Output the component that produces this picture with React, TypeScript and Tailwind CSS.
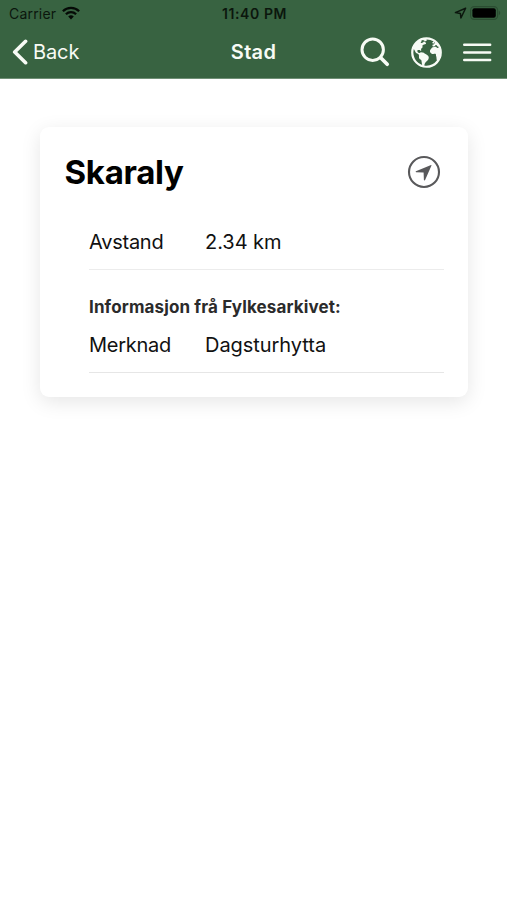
import { IoEarth } from "react-icons/io5";

function StatusBar() {
  return (
    <div className="grid h-[26px] grid-cols-3 items-center pl-[9px] pr-[5px] text-[14px] text-[#0b160d]">
      <div className="flex items-center gap-[6px]">
        <span className="tracking-[0.2px]">Carrier</span>
        <svg width="18" height="14" viewBox="0 0 18 14" fill="none" stroke="#050a06" strokeWidth="2.3">
          <path d="M0.9 5.2a11.6 11.6 0 0 1 16.2 0" />
          <path d="M3.9 8.3a7.3 7.3 0 0 1 10.2 0" />
          <path d="M9 13.6 6.2 10.6a4 4 0 0 1 5.6 0Z" fill="#050a06" stroke="none" />
        </svg>
      </div>
      <span className="pr-[2px] text-center font-semibold tracking-[0.6px]">11:40 PM</span>
      <div className="flex items-center justify-end gap-[3px]">
        <svg width="13" height="12" viewBox="0 0 13 12" fill="none" stroke="#0b160d" strokeWidth="1.5" strokeLinejoin="round">
          <path d="M11.6 1.2 1.4 5.6l5 .8.5 4.6Z" />
        </svg>
        <svg width="32" height="14" viewBox="0 0 32 14">
          <rect x="0.6" y="0.6" width="27" height="12.8" rx="3.6" fill="none" stroke="#2b4d32" strokeWidth="1.1" />
          <rect x="2.4" y="2.2" width="23.4" height="9.6" rx="2" fill="#000" />
          <path d="M28.8 4.8a2.4 2.4 0 0 1 0 4.4Z" fill="#2b4d32" />
        </svg>
      </div>
    </div>
  );
}

function NavBar() {
  return (
    <div className="grid h-[52px] grid-cols-[1fr_auto_1fr] items-center pl-3 pr-[15px] text-[20px] text-[#f7fbf5]">
      <div className="flex items-center gap-[5px]">
        <svg width="16" height="26" viewBox="0 0 16 26" fill="none" stroke="currentColor" strokeWidth="3.6" strokeLinecap="round" strokeLinejoin="round">
          <path d="M13.6 2.3 2.7 13l10.9 10.7" />
        </svg>
        <span className="tracking-[-0.1px]">Back</span>
      </div>
      <span className="pl-[3px] font-semibold tracking-[0.3px]">Stad</span>
      <div className="flex items-center justify-end">
        <svg width="30" height="30" viewBox="0 0 30 30" fill="none" stroke="currentColor" strokeLinecap="round">
          <circle cx="12.7" cy="12.7" r="10.7" strokeWidth="3" />
          <path d="m20.7 20.7 6.5 6.5" strokeWidth="3.7" />
        </svg>
        <IoEarth size={35} className="ml-[19px] mr-[19px]" />
        <svg width="29" height="20" viewBox="0 0 29 20" stroke="currentColor" strokeWidth="2.4" strokeLinecap="round">
          <path d="M1.2 2.7h26M1.2 10.5h26M1.2 18h26" />
        </svg>
      </div>
    </div>
  );
}

function Row({ label, value }: { label: string; value: string }) {
  return (
    <div className="flex text-[20px] leading-6 text-[#111]">
      <span className="w-[116px] tracking-[-0.25px]">{label}</span>
      <span className="tracking-[-0.05px]">{value}</span>
    </div>
  );
}

export default function App() {
  return (
    <div className="h-[900px] w-[507px] bg-white font-['Inter','Liberation_Sans',sans-serif]">
      <header className="h-[79px] border-b border-[#6f8f75] bg-[#386341]">
        <StatusBar />
        <NavBar />
      </header>
      <main className="px-10 pt-12">
        <section className="h-[270px] w-[428px] rounded-[9px] bg-white px-6 pt-6 shadow-[0_5px_20px_rgba(0,0,0,0.1)]">
          <div className="flex h-[42px] items-center justify-between">
            <h1 className="pl-[0.5px] text-[33px] font-bold leading-[42px] tracking-[-0.3px] text-black">Skaraly</h1>
            <svg className="mr-[3px]" width="34" height="34" viewBox="0 0 34 34">
              <circle cx="17" cy="17" r="15" fill="none" stroke="#59595b" strokeWidth="2.1" />
              <path d="M24.1 9.9 8.9 16.3q-.7.6.2 1l7.5.3.3 7.4q.5 1 1.2.1L24.5 10.6q.1-.7-.4-.7Z" fill="#59595b" />
            </svg>
          </div>
          <div className="pl-[25px]">
            <div className="mt-[37px] h-[40px] border-b border-[#ececec]">
              <Row label="Avstand" value="2.34 km" />
            </div>
            <h2 className="mt-[25px] text-[17px] font-bold leading-6 tracking-[0.13px] text-[#2b2b2b]">Informasjon frå Fylkesarkivet:</h2>
            <div className="mt-[14px] h-[40px] border-b border-[#e6e6e6]">
              <Row label="Merknad" value="Dagsturhytta" />
            </div>
          </div>
        </section>
      </main>
    </div>
  );
}
